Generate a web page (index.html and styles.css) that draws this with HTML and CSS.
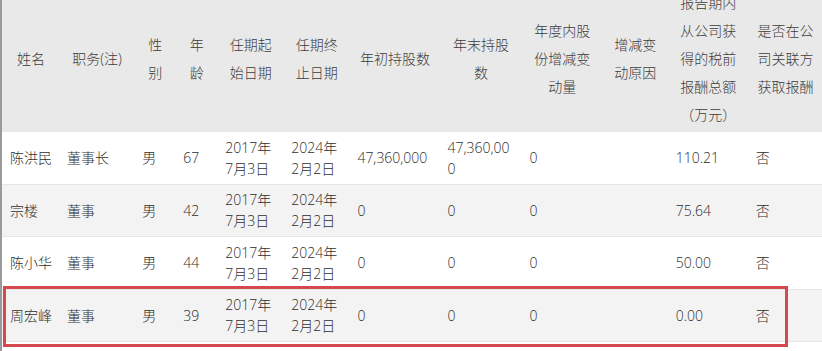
FILE: index.html
```html
<!DOCTYPE html>
<html lang="zh-CN">
<head>
<meta charset="utf-8">
<title>董事持股及报酬</title>
<link rel="stylesheet" href="styles.css">
</head>
<body>
<div class="sheet">
  <table class="grid">
    <colgroup>
      <col class="c-name"><col class="c-role"><col class="c-sex"><col class="c-age">
      <col class="c-start"><col class="c-end"><col class="c-open"><col class="c-close">
      <col class="c-delta"><col class="c-reason"><col class="c-pay"><col class="c-rel">
    </colgroup>
    <thead>
      <tr>
        <th>姓名</th>
        <th>职务(注)</th>
        <th>性别</th>
        <th>年龄</th>
        <th>任期起始日期</th>
        <th>任期终止日期</th>
        <th>年初持股数</th>
        <th>年末持股数</th>
        <th>年度内股份增减变动量</th>
        <th>增减变动原因</th>
        <th>报告期内从公司获得的税前报酬总额（万元）</th>
        <th>是否在公司关联方获取报酬</th>
      </tr>
    </thead>
    <tbody>
      <tr>
        <td>陈洪民</td><td>董事长</td><td>男</td><td>67</td>
        <td>2017年7月3日</td><td>2024年2月2日</td>
        <td>47,360,000</td><td>47,360,000</td><td>0</td><td></td>
        <td>110.21</td><td>否</td>
      </tr>
      <tr class="alt">
        <td>宗楼</td><td>董事</td><td>男</td><td>42</td>
        <td>2017年7月3日</td><td>2024年2月2日</td>
        <td>0</td><td>0</td><td>0</td><td></td>
        <td>75.64</td><td>否</td>
      </tr>
      <tr>
        <td>陈小华</td><td>董事</td><td>男</td><td>44</td>
        <td>2017年7月3日</td><td>2024年2月2日</td>
        <td>0</td><td>0</td><td>0</td><td></td>
        <td>50.00</td><td>否</td>
      </tr>
      <tr class="alt">
        <td>周宏峰</td><td>董事</td><td>男</td><td>39</td>
        <td>2017年7月3日</td><td>2024年2月2日</td>
        <td>0</td><td>0</td><td>0</td><td></td>
        <td>0.00</td><td>否</td>
      </tr>
      <tr>
        <td></td><td></td><td></td><td></td>
        <td>2017年7月3日</td><td>2024年2月2日</td>
        <td></td><td></td><td></td><td></td>
        <td></td><td></td>
      </tr>
    </tbody>
  </table>
  <div class="highlight"></div>
</div>
</body>
</html>
```

FILE: styles.css
```css
html, body {
  margin: 0;
  padding: 0;
  background: #ffffff;
  overflow: hidden;
}

body {
  font-family: "Open Sans", "Noto Sans CJK SC", sans-serif;
  font-size: 14px;
  font-weight: 300;
  color: #2e2e2e;
}

.sheet {
  position: relative;
  margin-top: -13px;
  width: 822px;
}

.grid {
  width: 822px;
  border-collapse: collapse;
  table-layout: fixed;
  border-left: 2px solid #9a9a9a;
  word-break: break-all;
}

.c-name { width: 58px; }
.c-role { width: 75px; }
.c-sex { width: 41px; }
.c-age { width: 42px; }
.c-start { width: 66px; }
.c-end { width: 66px; }
.c-open { width: 90px; }
.c-close { width: 82px; }
.c-delta { width: 80px; }
.c-reason { width: 66px; }
.c-pay { width: 80px; }
.c-rel { width: 74px; }

.grid th {
  background: #e9e9e9;
  color: #3c3c3c;
  font-weight: 300;
  line-height: 28px;
  padding: 2px 7px 2px 8px;
  text-align: center;
  vertical-align: middle;
}

.grid td {
  line-height: 21px;
  padding: 4.75px 7px 4.75px 8px;
  text-align: left;
  vertical-align: middle;
  border-top: 1px solid #e6e6e6;
}

.grid tr.alt td {
  background: #f3f3f3;
}

.highlight {
  position: absolute;
  left: 3px;
  top: 299px;
  width: 779px;
  height: 55px;
  border: 3px solid #d5484e;
  pointer-events: none;
}
```
